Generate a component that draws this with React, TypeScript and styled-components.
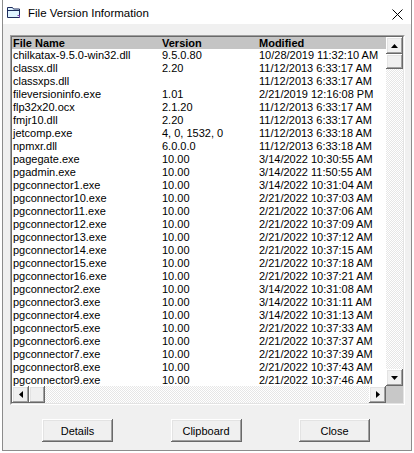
import React from 'react';
import styled, { createGlobalStyle } from 'styled-components';

const GlobalStyle = createGlobalStyle`
  html, body {
    margin: 0;
    padding: 0;
    background: #ffffff;
  }
  body {
    font-family: "Liberation Sans", Arial, sans-serif;
    color: #000;
  }
`;

interface FileEntry {
  name: string;
  version: string;
  modified: string;
}

const files: FileEntry[] = [
  { name: 'chilkatax-9.5.0-win32.dll', version: '9.5.0.80', modified: '10/28/2019 11:32:10 AM' },
  { name: 'classx.dll', version: '2.20', modified: '11/12/2013 6:33:17 AM' },
  { name: 'classxps.dll', version: '', modified: '11/12/2013 6:33:17 AM' },
  { name: 'fileversioninfo.exe', version: '1.01', modified: '2/21/2019 12:16:08 PM' },
  { name: 'flp32x20.ocx', version: '2.1.20', modified: '11/12/2013 6:33:17 AM' },
  { name: 'fmjr10.dll', version: '2.20', modified: '11/12/2013 6:33:17 AM' },
  { name: 'jetcomp.exe', version: '4, 0, 1532, 0', modified: '11/12/2013 6:33:18 AM' },
  { name: 'npmxr.dll', version: '6.0.0.0', modified: '11/12/2013 6:33:18 AM' },
  { name: 'pagegate.exe', version: '10.00', modified: '3/14/2022 10:30:55 AM' },
  { name: 'pgadmin.exe', version: '10.00', modified: '3/14/2022 11:50:55 AM' },
  { name: 'pgconnector1.exe', version: '10.00', modified: '3/14/2022 10:31:04 AM' },
  { name: 'pgconnector10.exe', version: '10.00', modified: '2/21/2022 10:37:03 AM' },
  { name: 'pgconnector11.exe', version: '10.00', modified: '2/21/2022 10:37:06 AM' },
  { name: 'pgconnector12.exe', version: '10.00', modified: '2/21/2022 10:37:09 AM' },
  { name: 'pgconnector13.exe', version: '10.00', modified: '2/21/2022 10:37:12 AM' },
  { name: 'pgconnector14.exe', version: '10.00', modified: '2/21/2022 10:37:15 AM' },
  { name: 'pgconnector15.exe', version: '10.00', modified: '2/21/2022 10:37:18 AM' },
  { name: 'pgconnector16.exe', version: '10.00', modified: '2/21/2022 10:37:21 AM' },
  { name: 'pgconnector2.exe', version: '10.00', modified: '3/14/2022 10:31:08 AM' },
  { name: 'pgconnector3.exe', version: '10.00', modified: '3/14/2022 10:31:11 AM' },
  { name: 'pgconnector4.exe', version: '10.00', modified: '3/14/2022 10:31:13 AM' },
  { name: 'pgconnector5.exe', version: '10.00', modified: '2/21/2022 10:37:33 AM' },
  { name: 'pgconnector6.exe', version: '10.00', modified: '2/21/2022 10:37:37 AM' },
  { name: 'pgconnector7.exe', version: '10.00', modified: '2/21/2022 10:37:39 AM' },
  { name: 'pgconnector8.exe', version: '10.00', modified: '2/21/2022 10:37:43 AM' },
  { name: 'pgconnector9.exe', version: '10.00', modified: '2/21/2022 10:37:46 AM' },
];

// classic raised 3D edge used by buttons, scroll arrows and thumbs
const raised = `
  background: #f0f0f0;
  box-shadow:
    inset -1px -1px #696969,
    inset 1px 1px #ffffff,
    inset -2px -2px #a0a0a0,
    inset 2px 2px #e3e3e3;
`;

const Window = styled.div`
  margin-left: 2px;
  width: 410px;
  height: 451px;
  box-sizing: border-box;
  border: 1px solid #8c8c8c;
  border-top: none;
  display: flex;
  flex-direction: column;
`;

const TitleBar = styled.div`
  height: 24px;
  flex: none;
  background: #ffffff;
  display: flex;
  align-items: center;
  padding: 0 8px 0 4px;
  gap: 7px;
`;

const TitleText = styled.span`
  font-size: 11.5px;
  line-height: 14px;
  margin-top: 1px;
`;

const CloseGlyph = styled.svg`
  margin-left: auto;
  margin-top: 4px;
`;

const Body = styled.div`
  flex: 1;
  background: #f0f0f0;
  padding: 11px 6px 0 7px;
  display: flex;
  flex-direction: column;
`;

const ListFrame = styled.div`
  width: 395px;
  height: 370px;
  box-sizing: border-box;
  border: 1px solid;
  border-color: #a0a0a0 #ffffff #ffffff #a0a0a0;
`;

const ListInner = styled.div`
  height: 100%;
  box-sizing: border-box;
  border: 1px solid;
  border-color: #696969 #e3e3e3 #e3e3e3 #696969;
  background: #ffffff;
  display: grid;
  grid-template-columns: 1fr 17px;
  grid-template-rows: 1fr 17px;
  overflow: hidden;
`;

const ListView = styled.div`
  overflow: hidden;
  min-height: 0;
  font-size: 11px;
`;

const Row = styled.div<{ $header?: boolean }>`
  display: grid;
  grid-template-columns: 149px 97px 1fr;
  height: ${p => (p.$header ? 12 : 13)}px;
  line-height: ${p => (p.$header ? 12 : 13)}px;
  background: ${p => (p.$header ? '#c4c4c4' : 'transparent')};
  font-weight: ${p => (p.$header ? 700 : 400)};
  white-space: nowrap;
`;

const Cell = styled.span`
  padding-left: 1px;
  overflow: hidden;
`;

const VScroll = styled.div`
  display: flex;
  flex-direction: column;
  background: repeating-conic-gradient(#ffffff 0 25%, #e6e6e6 0 50%) 0 0 / 2px 2px;
`;

const HScroll = styled.div`
  display: flex;
  background: repeating-conic-gradient(#ffffff 0 25%, #e6e6e6 0 50%) 0 0 / 2px 2px;
`;

const ArrowButton = styled.div`
  ${raised}
  width: 17px;
  height: 17px;
  flex: none;
  display: flex;
  align-items: center;
  justify-content: center;
`;

const Thumb = styled.div<{ $horizontal?: boolean }>`
  ${raised}
  flex: none;
  width: ${p => (p.$horizontal ? 16 : 17)}px;
  height: ${p => (p.$horizontal ? 17 : 15)}px;
`;

const Spacer = styled.div`
  flex: 1;
`;

const Corner = styled.div`
  background: #c8c8c8;
`;

const ButtonRow = styled.div`
  display: flex;
  gap: 57.5px;
  padding-left: 32px;
  margin-top: 14px;
`;

const PushButton = styled.button`
  ${raised}
  width: 71px;
  height: 23px;
  border: none;
  padding: 0;
  font-family: "Liberation Sans", Arial, sans-serif;
  font-size: 11px;
  color: #000;
`;

const Triangle: React.FC<{ dir: 'up' | 'down' | 'left' | 'right' }> = ({ dir }) => {
  const pts = {
    up: '0,4 7,4 3.5,0',
    down: '0,0 7,0 3.5,4',
    left: '4,0 4,7 0,3.5',
    right: '0,0 0,7 4,3.5',
  }[dir];
  const vertical = dir === 'up' || dir === 'down';
  return (
    <svg width={vertical ? 7 : 4} height={vertical ? 4 : 7} viewBox={vertical ? '0 0 7 4' : '0 0 4 7'}>
      <polygon points={pts} fill="#000" />
    </svg>
  );
};

const FormIcon = () => (
  <svg width="14" height="12" viewBox="0 0 14 12">
    <path d="M0.5 1.5h5l1 1.5h6v8.5h-12z" fill="#dff3ff" stroke="#1d2b5c" />
    <path d="M0.5 4.5h12" stroke="#1d2b5c" />
    <path d="M10.5 9.5h2v2" stroke="#7a3fb0" fill="none" />
  </svg>
);

export default function App() {
  return (
    <>
      <GlobalStyle />
      <Window>
        <TitleBar>
          <FormIcon />
          <TitleText>File Version Information</TitleText>
          <CloseGlyph width="11" height="11" viewBox="0 0 11 11">
            <path d="M0.5 0.5L10.5 10.5M10.5 0.5L0.5 10.5" stroke="#000" strokeWidth="1" />
          </CloseGlyph>
        </TitleBar>
        <Body>
          <ListFrame>
            <ListInner>
              <ListView>
                <Row $header>
                  <Cell>File Name</Cell>
                  <Cell>Version</Cell>
                  <Cell>Modified</Cell>
                </Row>
                {files.map(f => (
                  <Row key={f.name}>
                    <Cell>{f.name}</Cell>
                    <Cell>{f.version}</Cell>
                    <Cell>{f.modified}</Cell>
                  </Row>
                ))}
              </ListView>
              <VScroll>
                <ArrowButton><Triangle dir="up" /></ArrowButton>
                <Thumb />
                <Spacer />
                <ArrowButton><Triangle dir="down" /></ArrowButton>
              </VScroll>
              <HScroll>
                <ArrowButton><Triangle dir="left" /></ArrowButton>
                <Thumb $horizontal />
                <Spacer />
                <ArrowButton><Triangle dir="right" /></ArrowButton>
              </HScroll>
              <Corner />
            </ListInner>
          </ListFrame>
          <ButtonRow>
            <PushButton>Details</PushButton>
            <PushButton>Clipboard</PushButton>
            <PushButton>Close</PushButton>
          </ButtonRow>
        </Body>
      </Window>
    </>
  );
}
